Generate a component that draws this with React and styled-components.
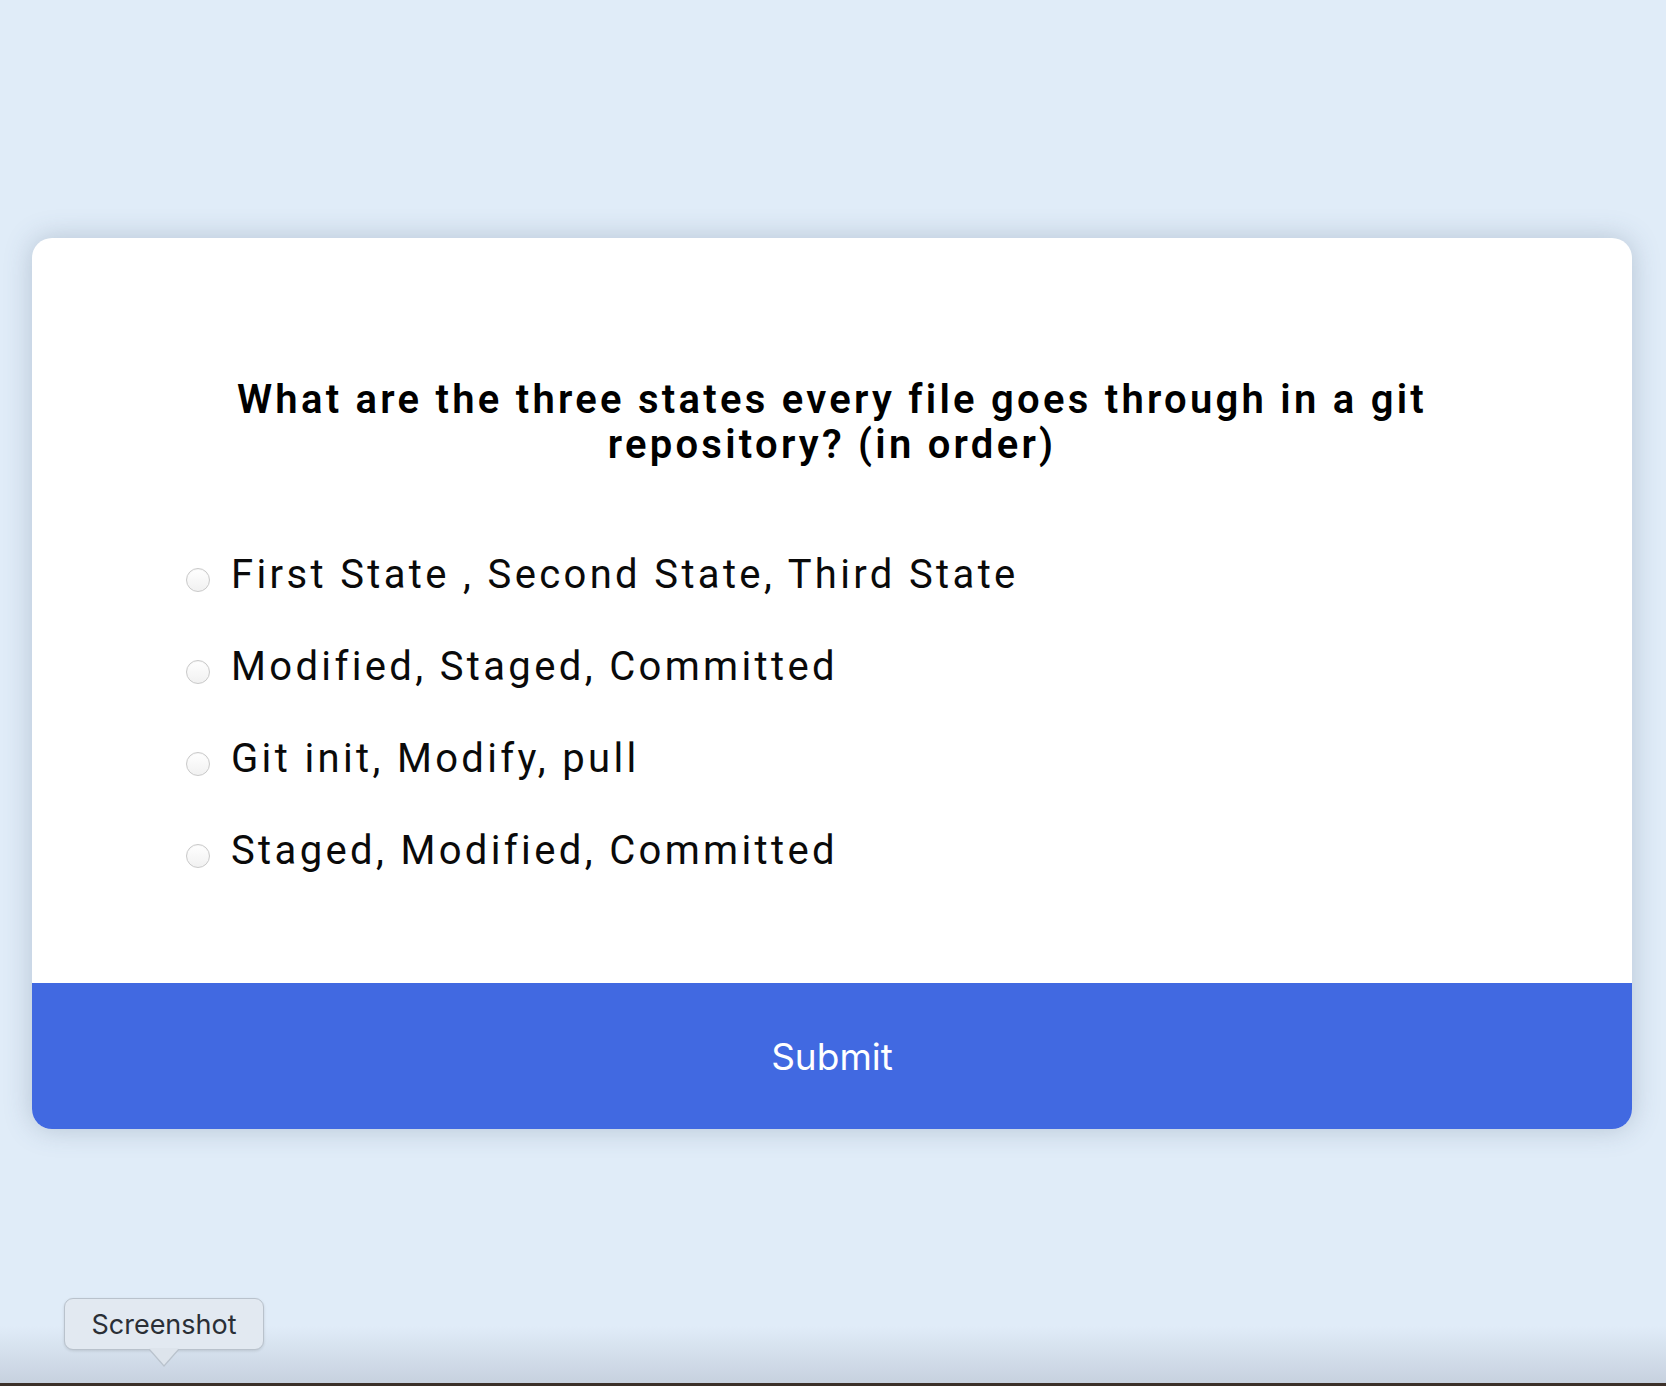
import React, { useState } from 'react';
import styled, { createGlobalStyle } from 'styled-components';

const GlobalStyle = createGlobalStyle`
  html, body {
    margin: 0;
    padding: 0;
    background-color: #e0ecf8;
  }
  * {
    box-sizing: border-box;
  }
`;

const Page = styled.div`
  position: relative;
  min-height: 1386px;
  padding: 238px 34px 0 32px;
  overflow: hidden;
  font-family: Roboto, 'Noto Sans', sans-serif;
`;

const Card = styled.div`
  width: 1600px;
  background-color: #ffffff;
  border-radius: 20px;
  box-shadow: 0 0 28px rgba(70, 90, 120, 0.28);
  overflow: hidden;
  display: flex;
  flex-direction: column;
`;

const Body = styled.div`
  padding: 139px 0 109px 0;
  display: flex;
  flex-direction: column;
  align-items: center;
`;

const Question = styled.h2`
  margin: 0;
  max-width: 1320px;
  font-size: 40px;
  line-height: 45px;
  font-weight: 600;
  letter-spacing: 3.25px;
  text-align: center;
  color: #000000;
`;

const OptionList = styled.div`
  align-self: stretch;
  margin-top: 85px;
  padding-left: 154px;
  display: flex;
  flex-direction: column;
  gap: 46px;
`;

const Option = styled.label`
  display: flex;
  align-items: flex-start;
  gap: 21px;
  cursor: pointer;
  font-size: 40px;
  line-height: 46px;
  letter-spacing: 3.35px;
  color: #0a0a0a;
`;

const Radio = styled.input`
  appearance: none;
  -webkit-appearance: none;
  flex: none;
  width: 24px;
  height: 24px;
  margin: 16px 0 0 0;
  border-radius: 50%;
  border: 1px solid ${(p) => (p.checked ? '#4169e1' : '#c9c9c9')};
  background: ${(p) =>
    p.checked
      ? 'radial-gradient(circle, #ffffff 0 4px, #4169e1 5px)'
      : 'linear-gradient(#ffffff, #f1f1f1)'};
  box-shadow: inset 0 1px 1px rgba(0, 0, 0, 0.04);
  cursor: pointer;
`;

const SubmitButton = styled.button`
  height: 146px;
  border: none;
  background-color: #4169e1;
  color: #ffffff;
  font-family: Inter, 'Liberation Sans', sans-serif;
  font-size: 37px;
  font-weight: 400;
  cursor: pointer;
`;

const DockShade = styled.div`
  position: absolute;
  left: 0;
  right: 0;
  bottom: 0;
  height: 60px;
  background: linear-gradient(rgba(200, 212, 226, 0), rgba(196, 206, 220, 0.9));
  border-bottom: 3px solid #3b3029;
`;

const Tooltip = styled.div`
  position: absolute;
  left: 64px;
  top: 1298px;
  width: 200px;
  height: 52px;
  display: flex;
  align-items: center;
  justify-content: center;
  background-color: #e2e9f1;
  border: 1px solid #b9c2cc;
  border-radius: 9px;
  box-shadow: 0 1px 3px rgba(0, 0, 0, 0.12);
  font-family: Inter, 'Liberation Sans', sans-serif;
  font-size: 27px;
  color: #2a2f36;

  &::before,
  &::after {
    content: '';
    position: absolute;
    left: 84px;
    width: 30px;
    height: 17px;
    clip-path: polygon(0 0, 100% 0, 50% 100%);
  }

  &::before {
    bottom: -18px;
    background-color: #b9c2cc;
  }

  &::after {
    bottom: -16px;
    background-color: #dde4ec;
  }
`;

const options = [
  'First State , Second State, Third State',
  'Modified, Staged, Committed',
  'Git init, Modify, pull',
  'Staged, Modified, Committed',
];

const App = () => {
  const [selected, setSelected] = useState(null);

  return (
    <>
      <GlobalStyle />
      <Page>
        <Card>
          <Body>
            <Question>
              What are the three states every file goes through in a git repository? (in order)
            </Question>
            <OptionList>
              {options.map((option, index) => (
                <Option key={index}>
                  <Radio
                    type="radio"
                    name="answer"
                    checked={selected === index}
                    onChange={() => setSelected(index)}
                  />
                  <span>{option}</span>
                </Option>
              ))}
            </OptionList>
          </Body>
          <SubmitButton>Submit</SubmitButton>
        </Card>
        <DockShade />
        <Tooltip>Screenshot</Tooltip>
      </Page>
    </>
  );
};

export default App;
